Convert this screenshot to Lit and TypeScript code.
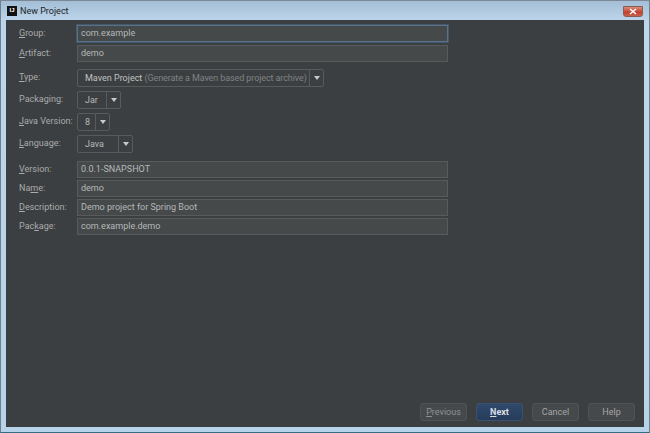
import { LitElement, html, css } from "lit";
import { customElement } from "lit/decorators.js";

const arrow = html`<svg class="arrow" width="6" height="4" viewBox="0 0 6 4"><path d="M0 0H6L3 4Z" fill="#c8cacb"/></svg>`;

@customElement("app-root")
export class AppRoot extends LitElement {
  static styles = css`
    :host { display: block; width: 650px; height: 433px; overflow: hidden; font-family: Roboto, "Noto Sans", sans-serif; font-size: 9px; color: #b4b6b7; }
    .frame { box-sizing: border-box; width: 650px; height: 433px; display: flex; flex-direction: column; padding: 1px 5px 5px 5px; background: linear-gradient(180deg, #a3bed6 0, #bdd5ea 20px, #b7d3ea 100%); border: 1px solid #6f7f8c; border-bottom-color: #2f6f85; border-top-color:#7b8894; }
    .title { height: 18px; flex: none; display: flex; align-items: center; gap: 3px; color: #1c2228; font-size: 9px; padding-left: 1px; }
    .logo { width: 10px; height: 10px; background: #111; color: #fff; font: bold 6px/9px "Liberation Sans", sans-serif; text-align: center; flex: none; }
    .close { margin-left: auto; margin-right: 1px; margin-top: 1px; width: 20px; height: 11px; border-radius: 0 0 3px 3px; background: linear-gradient(180deg, #d98a78, #c2412c 60%, #c9604c); border: 1px solid #8a5a55; box-sizing: border-box; display: flex; align-items: center; justify-content: center; }
    .body { flex: 1; background: #3c3f41; display: flex; flex-direction: column; padding: 5px 9px 6px 13px; min-height: 0; }
    .form { display: grid; grid-template-columns: 58px 371px; align-items: start; }
    label { line-height: 17px; white-space: nowrap; color: #a9abac; }
    u { text-underline-offset: 1px; }
    .input { box-sizing: border-box; height: 17px; border: 1px solid #585a5c; background: #45494a; padding-left: 3px; line-height: 15px; color: #b6b8b9; white-space: nowrap; }
    .focus { border: 1px solid #56728c; box-shadow: 0 0 0 1px #465868; }
    .select { box-sizing: border-box; height: 18px; border: 1px solid #585a5c; border-radius: 2px; display: flex; background: #3c3f41; line-height: 17px; color: #b6b8b9; white-space: nowrap; justify-self: start; }
    .w-type { width: 247px; }
    .w-pack { width: 44px; }
    .w-java { width: 33px; }
    .w-lang { width: 56px; }
    .select .val { padding: 0 0 0 7px; flex: 1; min-width: 0; }
    .select b { font-weight: 400; color: #c0c2c3; }
    .select i { font-style: normal; color: #7f8284; letter-spacing: -0.1px; }
    .select .btn { width: 13px; border-left: 1px solid #585a5c; display: flex; align-items: center; justify-content: center; flex: none; }
    .arrow { display: block; }
    .r1 { margin-bottom: 3px; }
    .r2 { margin-bottom: 7px; }
    .r3 { margin-bottom: 4px; }
    .r4 { margin-bottom: 8px; }
    .r5 { margin-bottom: 2px; }
    .footer { margin-top: auto; display: flex; justify-content: flex-end; gap: 9px; }
    .b { box-sizing: border-box; width: 47px; height: 18px; border: 1px solid #505355; border-radius: 3px; background: #45494b; color: #8f9293; text-align: center; line-height: 16px; }
    .b.light { color: #a5a7a8; }
    .b.next { background: linear-gradient(180deg, #304a6c, #263c5a); border-color: #3a5270; color: #d8dde2; font-weight: 700; }
  `;

  render() {
    return html`<div class="frame">
      <div class="title">
        <div class="logo">IJ</div><span>New Project</span>
        <div class="close"><svg width="8" height="7" viewBox="0 0 8 7"><path d="M1 1L7 6M7 1L1 6" stroke="#fff" stroke-width="1.6"/></svg></div>
      </div>
      <div class="body">
        <div class="form">
          <label class="r1"><u>G</u>roup:</label><div class="input focus r1">com.example</div>
          <label class="r2"><u>A</u>rtifact:</label><div class="input r2">demo</div>
          <label class="r3"><u>T</u>ype:</label>
          <div class="select w-type r3"><div class="val"><b>Maven Project</b> <i>(Generate a Maven based project archive)</i></div><div class="btn">${arrow}</div></div>
          <label class="r3">Packaging:</label>
          <div class="select w-pack r3"><div class="val">Jar</div><div class="btn">${arrow}</div></div>
          <label class="r3"><u>J</u>ava Version:</label>
          <div class="select w-java r3"><div class="val">8</div><div class="btn">${arrow}</div></div>
          <label class="r4"><u>L</u>anguage:</label>
          <div class="select w-lang r4"><div class="val">Java</div><div class="btn">${arrow}</div></div>
          <label class="r5"><u>V</u>ersion:</label><div class="input r5">0.0.1-SNAPSHOT</div>
          <label class="r5">Na<u>m</u>e:</label><div class="input r5">demo</div>
          <label class="r5"><u>D</u>escription:</label><div class="input r5">Demo project for Spring Boot</div>
          <label>Pac<u>k</u>age:</label><div class="input">com.example.demo</div>
        </div>
        <div class="footer">
          <div class="b"><u>P</u>revious</div>
          <div class="b next"><u>N</u>ext</div>
          <div class="b light">Cancel</div>
          <div class="b light">Help</div>
        </div>
      </div>
    </div>`;
  }
}
